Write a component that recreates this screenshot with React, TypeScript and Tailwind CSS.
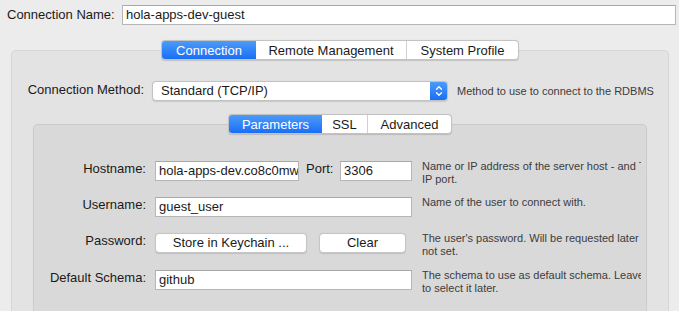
import React from "react";

const font = { fontFamily: '"Liberation Sans", Arial, sans-serif' };

function Segmented({ items, active }: { items: { label: string; w: string }[]; active: number }) {
  return (
    <div className="relative z-10 flex h-[20px] rounded-[4px] border border-[#c3c3c3] bg-white shadow-[0_0.5px_1px_rgba(0,0,0,0.15)] overflow-hidden">
      {items.map((it, i) => (
        <div
          key={it.label}
          className={`${it.w} flex items-center justify-center text-[13px] leading-none ${
            i === active
              ? "bg-gradient-to-b from-[#4b9bfa] to-[#1a6ef5] text-white"
              : "text-[#1a1a1a]"
          } ${i > 0 && i !== active + 1 && i !== active ? "border-l border-[#d0d0d0]" : ""}`}
        >
          {it.label}
        </div>
      ))}
    </div>
  );
}

function TextInput({ value, w }: { value: string; w: string }) {
  return (
    <div className={`${w} h-[20px] bg-white border border-[#b6b6b6] border-t-[#a8a8a8] flex items-center pl-[3px] text-[13px] text-[#1a1a1a] overflow-hidden whitespace-nowrap`}>
      {value}
    </div>
  );
}

function Button({ label, w }: { label: string; w: string }) {
  return (
    <div className={`${w} h-[20px] bg-white border border-[#c6c6c6] rounded-[4px] shadow-[0_0.5px_1px_rgba(0,0,0,0.12)] flex items-center justify-center text-[13px] text-[#1a1a1a]`}>
      {label}
    </div>
  );
}

function Help({ lines }: { lines: string[] }) {
  return (
    <div className="ml-[10px] text-[11px] leading-[13px] text-[#3c3c3c] whitespace-nowrap overflow-hidden w-[219px] -mt-[1px]">
      {lines.map((l) => (
        <div key={l}>{l}</div>
      ))}
    </div>
  );
}

function Row({ label, children, help, className = "" }: { label: string; children: React.ReactNode; help: string[]; className?: string }) {
  return (
    <div className={`flex items-start h-[20px] ${className}`}>
      <div className="w-[112px] text-right text-[13px] text-[#1a1a1a] leading-[20px] -mt-[2px]">{label}</div>
      <div className="ml-[9px] flex items-start">{children}</div>
      <Help lines={help} />
    </div>
  );
}

export default function App() {
  return (
    <div className="w-[679px] h-[311px] bg-[#ececec] overflow-hidden flex flex-col" style={font}>
      {/* Connection name */}
      <div className="flex items-center pt-[5px]">
        <div className="w-[122px] shrink-0 pl-[7px] text-[13px] text-[#1a1a1a] -mt-[1px]">Connection Name:</div>
        <TextInput value="hola-apps-dev-guest" w="w-[554px]" />
      </div>

      {/* Outer tabs + box */}
      <div className="ml-[11px] w-[658px] mt-[15px] flex flex-col flex-1">
        <div className="flex justify-center">
          <Segmented
            active={0}
            items={[
              { label: "Connection", w: "w-[94px]" },
              { label: "Remote Management", w: "w-[150px]" },
              { label: "System Profile", w: "w-[112px]" },
            ]}
          />
        </div>
        <div className="-mt-[10px] flex-1 rounded-t-[5px] border border-b-0 border-[#d6d6d6] bg-[#e3e3e3] flex flex-col pt-[30px]">
          <div className="flex items-center">
            <div className="w-[132px] text-right text-[13px] text-[#1a1a1a] -mt-[2px]">Connection Method:</div>
            <div className="ml-[8px] w-[296px] h-[20px] flex bg-white border border-[#c3c3c3] rounded-[4px] shadow-[0_0.5px_1px_rgba(0,0,0,0.12)] overflow-hidden">
              <div className="flex-1 pl-[8px] text-[13px] leading-[18px] text-[#1a1a1a]">Standard (TCP/IP)</div>
              <div className="w-[17px] h-full bg-gradient-to-b from-[#4b9bfa] to-[#1a6ef5] flex items-center justify-center">
                <svg width="8" height="12" viewBox="0 0 8 12" fill="none" stroke="white" strokeWidth="1.3" strokeLinecap="round" strokeLinejoin="round">
                  <path d="M1.5 4.2 L4 1.8 L6.5 4.2" />
                  <path d="M1.5 7.8 L4 10.2 L6.5 7.8" />
                </svg>
              </div>
            </div>
            <div className="ml-[9px] text-[11px] text-[#3c3c3c] whitespace-nowrap">Method to use to connect to the RDBMS</div>
          </div>

          {/* Inner tabs + box */}
          <div className="ml-[21px] w-[614px] mt-[13px] flex flex-col flex-1">
            <div className="flex justify-center">
              <Segmented
                active={0}
                items={[
                  { label: "Parameters", w: "w-[93px]" },
                  { label: "SSL", w: "w-[45px]" },
                  { label: "Advanced", w: "w-[84px]" },
                ]}
              />
            </div>
            <div className="-mt-[10px] flex-1 rounded-t-[5px] border border-b-0 border-[#cbcbcb] bg-[#d9d9d9] flex flex-col gap-[16px] pt-[36px]">
              <Row label="Hostname:" help={["Name or IP address of the server host - and TCP/", "IP port."]}>
                <TextInput value="hola-apps-dev.co8c0mw" w="w-[144px]" />
                <div className="ml-[7px] w-[34px] text-[13px] text-[#1a1a1a] leading-[20px] -mt-[2px]">Port:</div>
                <TextInput value="3306" w="w-[72px]" />
              </Row>
              <Row label="Username:" help={["Name of the user to connect with."]}>
                <TextInput value="guest_user" w="w-[257px]" />
              </Row>
              <Row label="Password:" help={["The user's password. Will be requested later if it's", "not set."]}>
                <Button label="Store in Keychain ..." w="w-[152px]" />
                <div className="w-[12px]" />
                <Button label="Clear" w="w-[87px]" />
                <div className="w-[6px]" />
              </Row>
              <Row className="mt-[1px]" label="Default Schema:" help={["The schema to use as default schema. Leave blank", "to select it later."]}>
                <TextInput value="github" w="w-[257px]" />
              </Row>
            </div>
          </div>
        </div>
      </div>
    </div>
  );
}
